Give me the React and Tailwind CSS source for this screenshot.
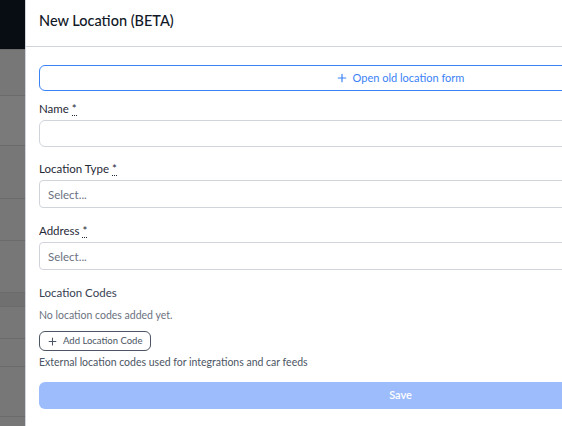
import React from "react";

const font = { fontFamily: '"Lato", "Liberation Sans", sans-serif' };

function Plus({ className }) {
  return (
    <svg viewBox="0 0 12 12" className={className} fill="none" stroke="currentColor" strokeWidth="1.4" strokeLinecap="round">
      <path d="M6 1.5v9M1.5 6h9" />
    </svg>
  );
}

function Label({ children, required }) {
  return (
    <div className="text-[11.5px] leading-4 text-[#1f2937] mb-[3px]">
      {children}
      {required && (
        <>
          {" "}
          <abbr className="no-underline border-b border-dotted border-[#1f2937]">*</abbr>
        </>
      )}
    </div>
  );
}

function Backdrop() {
  const rows = [
    { h: 50, bg: "bg-[#080d14]" },
    { h: 46, bg: "bg-[#777777]" },
    { h: 51, bg: "bg-[#7a7a7a]" },
    { h: 53, bg: "bg-[#777777]" },
    { h: 43, bg: "bg-[#777777]" },
    { h: 52, bg: "bg-[#777777]" },
    { h: 15, bg: "bg-[#707070]" },
    { h: 32, bg: "bg-[#777777]" },
    { h: 28, bg: "bg-[#777777]" },
    { h: 51, bg: "bg-[#777777]" },
    { h: 10, bg: "bg-[#777777]" },
  ];
  return (
    <div className="w-[25px] shrink-0 flex flex-col">
      {rows.map((r, i) => (
        <div key={i} className={`${r.bg} ${i > 0 ? "border-t border-[#6b6b6b]" : ""}`} style={{ height: r.h }} />
      ))}
    </div>
  );
}

export default function App() {
  return (
    <div className="w-[562px] h-[426px] overflow-hidden flex bg-white" style={font}>
      <Backdrop />
      <div className="w-[750px] shrink-0 bg-white border-l border-[#d1d5db] flex flex-col">
        <div className="h-[47px] border-b border-[#d1d5db] px-[13px] flex items-center">
          <h1 className="text-[14.5px] font-medium text-[#111827] -mt-[4px]">New Location (BETA)</h1>
        </div>
        <div className="px-[13px] pt-[18px] flex flex-col">
          <button className="h-[26px] w-full rounded-md border border-[#3b82f6] text-[#3b82f6] text-[11px] flex items-center justify-center gap-[6px]">
            <Plus className="w-[10px] h-[10px]" />
            Open old location form
          </button>

          <div className="mt-[10px]">
            <Label required>Name</Label>
            <input className="h-[27px] w-full rounded-md border border-[#d1d5db] px-2 text-[12px] outline-none" />
          </div>

          <div className="mt-[14px]">
            <Label required>Location Type</Label>
            <div className="h-[28px] w-full rounded border border-[#d1d5db] px-[8px] pt-[2px] flex items-center text-[11.5px] text-[#6b7280]">
              Select...
            </div>
          </div>

          <div className="mt-[15px]">
            <Label required>Address</Label>
            <div className="h-[28px] w-full rounded border border-[#d1d5db] px-[8px] pt-[2px] flex items-center text-[11.5px] text-[#6b7280]">
              Select...
            </div>
          </div>

          <div className="mt-[15px] text-[11.5px] leading-4 text-[#374151]">Location Codes</div>
          <div className="mt-[6px] text-[10.5px] leading-4 text-[#6b7280]">No location codes added yet.</div>
          <div className="mt-[8px]">
            <button className="h-[20px] rounded-md border border-[#4b5563] px-[8px] flex items-center gap-[6px] text-[9.5px] text-[#4b5563]">
              <Plus className="w-[9px] h-[9px]" />
              Add Location Code
            </button>
          </div>
          <div className="mt-[3px] text-[10.5px] leading-4 text-[#4b5563]">
            External location codes used for integrations and car feeds
          </div>
          <button className="mt-[12px] h-[27px] w-full rounded-md bg-[#9dbcfc] text-white text-[11px] font-semibold">
            Save
          </button>
        </div>
      </div>
    </div>
  );
}
